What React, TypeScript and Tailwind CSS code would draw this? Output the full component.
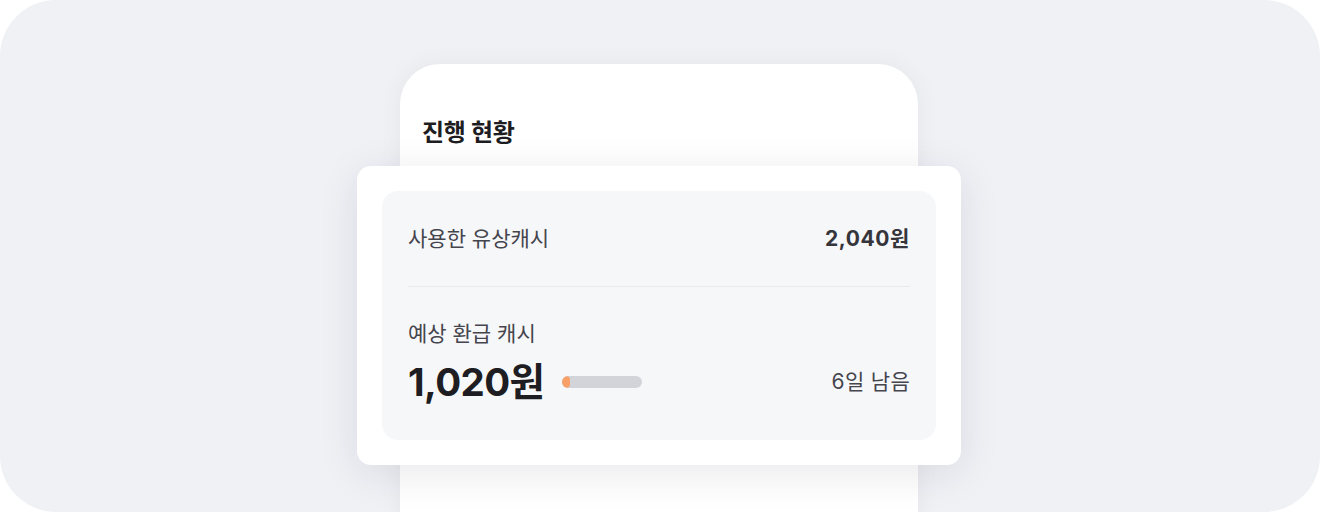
export default function App() {
  const font = { fontFamily: '"Inter", "Noto Sans CJK KR", sans-serif' };
  return (
    <div className="w-[1320px] h-[512px] bg-white" style={font}>
      <div className="relative h-full w-full overflow-hidden rounded-[56px] bg-[#f0f1f5] flex justify-center">
        {/* Phone card */}
        <div className="relative ml-[-2px] mt-[64px] h-[520px] w-[518px] rounded-t-[40px] bg-white shadow-[0_0_24px_rgba(20,20,40,0.05)]">
          <div className="px-[22px] pt-[54px]">
            <h2 className="text-[24px] font-bold leading-[30px] tracking-[-0.3px] text-[#1d1d22]">진행 현황</h2>
          </div>

          {/* Overlay card */}
          <div className="absolute left-[-43px] top-[102px] w-[604px] rounded-[14px] bg-white p-[25px] shadow-[0_8px_40px_rgba(30,30,60,0.10)]">
            <div className="rounded-[16px] bg-[#f6f7f9] px-[26px]">
              <div className="flex h-[96px] items-center justify-between border-b border-[#e8e9ed]">
                <span className="text-[21px] leading-[28px] text-[#45454d]">사용한 유상캐시</span>
                <span className="text-[21px] font-bold leading-[28px] tracking-[0.6px] text-[#35353b]">2,040원</span>
              </div>
              <div className="pt-[33px] pb-[34px]">
                <div className="text-[21px] leading-[28px] text-[#45454d]">예상 환급 캐시</div>
                <div className="mt-[10px] flex h-[48px] items-center justify-between">
                  <div className="flex items-center gap-[18px]">
                    <span className="text-[38.5px] font-bold leading-[48px] tracking-[-0.6px] text-[#1d1d22]">1,020원</span>
                    <div className="h-[12px] w-[80px] overflow-hidden rounded-full bg-[#d3d4da]">
                      <div className="h-full w-[8px] rounded-full bg-[#f9a068]" />
                    </div>
                  </div>
                  <span className="text-[21px] leading-[28px] tracking-[0.3px] text-[#45454d]">6일 남음</span>
                </div>
              </div>
            </div>
          </div>
        </div>
      </div>
    </div>
  );
}
